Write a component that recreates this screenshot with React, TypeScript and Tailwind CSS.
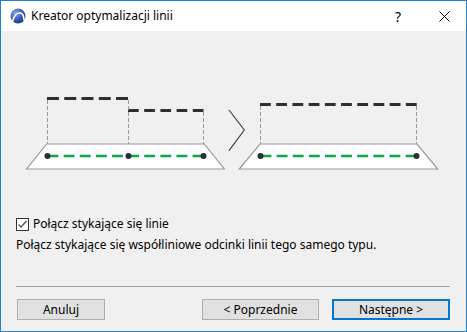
import React from "react";

const font = { fontFamily: '"Noto Sans", "Segoe UI", sans-serif' };

// evenly spread dashes between a and b
function dashes(x1: number, x2: number, n: number, gap: number) {
  const d = (x2 - x1 - gap * (n - 1)) / n;
  return `${d} ${gap}`;
}

function Diagram() {
  const dark = "#2b3038";
  const green = "#0aa84a";
  const grey = "#9a9a9a";
  return (
    <svg viewBox="1 31 465 180" className="-ml-[15px] -mr-[16px] h-[180px] w-[465px] shrink-0">
      {/* left: two segments */}
      <line x1="47" y1="98.5" x2="128" y2="98.5" stroke={dark} strokeWidth="3" strokeDasharray={dashes(47, 128, 5, 5.3)} />
      <line x1="128" y1="110.5" x2="203.5" y2="110.5" stroke={dark} strokeWidth="3" strokeDasharray={dashes(128, 203.5, 5, 5.5)} />
      <line x1="47.5" y1="100" x2="47.5" y2="156" stroke={grey} strokeWidth="1" strokeDasharray="4 2" />
      <line x1="128.5" y1="100" x2="128.5" y2="156" stroke={grey} strokeWidth="1" strokeDasharray="4 2" />
      <line x1="203.5" y1="112" x2="203.5" y2="156" stroke={grey} strokeWidth="1" strokeDasharray="4 2" />
      <polygon points="46.7,144 204.3,144 224.3,169 26.7,169" fill="#ffffff" stroke={grey} strokeWidth="1.2" />
      <line x1="47.5" y1="156" x2="203.5" y2="156" stroke={green} strokeWidth="2.5" strokeDasharray={dashes(47.5, 203.5, 10, 5.2)} />
      <circle cx="47.5" cy="156" r="3" fill={dark} />
      <circle cx="128.5" cy="156" r="3" fill={dark} />
      <circle cx="203.5" cy="156" r="3" fill={dark} />

      {/* chevron */}
      <polyline points="229,110 244.3,130 229,150.7" fill="none" stroke="#3c434b" strokeWidth="1.2" />

      {/* right: merged */}
      <line x1="260" y1="104.5" x2="416.7" y2="104.5" stroke={dark} strokeWidth="3" strokeDasharray={dashes(260, 416.7, 10, 5.4)} />
      <line x1="260.5" y1="106" x2="260.5" y2="156" stroke={grey} strokeWidth="1" strokeDasharray="4 2" />
      <line x1="416.5" y1="106" x2="416.5" y2="156" stroke={grey} strokeWidth="1" strokeDasharray="4 2" />
      <polygon points="260,144 417,144 437.7,169 239.3,169" fill="#ffffff" stroke={grey} strokeWidth="1.2" />
      <line x1="260.5" y1="156" x2="416.5" y2="156" stroke={green} strokeWidth="2.5" strokeDasharray={dashes(260.5, 416.5, 10, 5.2)} />
      <circle cx="260.5" cy="156" r="3" fill={dark} />
      <circle cx="416.5" cy="156" r="3" fill={dark} />
    </svg>
  );
}

function AppIcon() {
  return (
    <svg width="16" height="16" viewBox="0 0 16 16" className="shrink-0">
      <defs>
        <radialGradient id="ball" cx="0.35" cy="0.3" r="0.8">
          <stop offset="0" stopColor="#8aa6e6" />
          <stop offset="0.5" stopColor="#3b62c4" />
          <stop offset="1" stopColor="#1a2f7a" />
        </radialGradient>
      </defs>
      <circle cx="8" cy="8" r="7.5" fill="url(#ball)" />
      <path d="M2.5 13.5 C4 7 7.5 4.5 10.5 5 C12.5 5.4 13.8 8 14 12" fill="none" stroke="#ffffff" strokeWidth="1.6" strokeLinecap="round" />
    </svg>
  );
}

function Button({ label, primary = false, width }: { label: string; primary?: boolean; width: string }) {
  return (
    <button
      className={
        primary
          ? `${width} h-[21px] bg-[#e1e1e1] border-2 border-[#0078d7] text-[12px] text-black flex items-center justify-center`
          : `${width} h-[21px] bg-[#e1e1e1] border border-[#adadad] text-[12px] text-black flex items-center justify-center`
      }
    >
      {label}
    </button>
  );
}

export default function App() {
  return (
    <div className="w-[467px] h-[332px] border border-[#1883d7] bg-[#f0f0f0] flex flex-col overflow-hidden" style={font}>
      {/* title bar */}
      <div className="h-[30px] bg-white flex items-center pl-[9px] shrink-0">
        <AppIcon />
        <span className="ml-[5px] text-[12px] text-black">Kreator optymalizacji linii</span>
        <span className="ml-auto text-[14px] text-black w-[46px] text-center">?</span>
        <div className="w-[46px] flex items-center justify-center mr-[-1px]">
          <svg width="11" height="11" viewBox="0 0 11 11">
            <path d="M0.5 0.5 L10.5 10.5 M10.5 0.5 L0.5 10.5" stroke="#000" strokeWidth="1" />
          </svg>
        </div>
      </div>

      {/* body */}
      <div className="flex-1 flex flex-col pl-[15px] pr-[16px] pb-[11px]">
        <Diagram />

        <label className="mt-[6px] h-[14px] flex items-center gap-[4px] text-[12px] text-black">
          <span className="w-[13px] h-[13px] border border-[#333333] bg-white flex items-center justify-center">
            <svg width="11" height="11" viewBox="0 0 11 11">
              <path d="M1.5 5.5 L4 8 L9.5 2" fill="none" stroke="#555555" strokeWidth="1.4" />
            </svg>
          </span>
          Połącz stykające się linie
        </label>
        <p className="mt-[7px] leading-[14px] text-[12px] text-black">
          Połącz stykające się współliniowe odcinki linii tego samego typu.
        </p>

        <div className="flex-1" />
        <div className="h-px bg-[#a0a0a0]" />

        <div className="mt-[12px] flex items-center">
          <div className="ml-px">
            <Button label="Anuluj" width="w-[88px]" />
          </div>
          <div className="ml-auto flex gap-[13px]">
            <Button label="< Poprzednie" width="w-[117px]" />
            <Button label="Następne >" width="w-[118px]" primary />
          </div>
        </div>
      </div>
    </div>
  );
}
